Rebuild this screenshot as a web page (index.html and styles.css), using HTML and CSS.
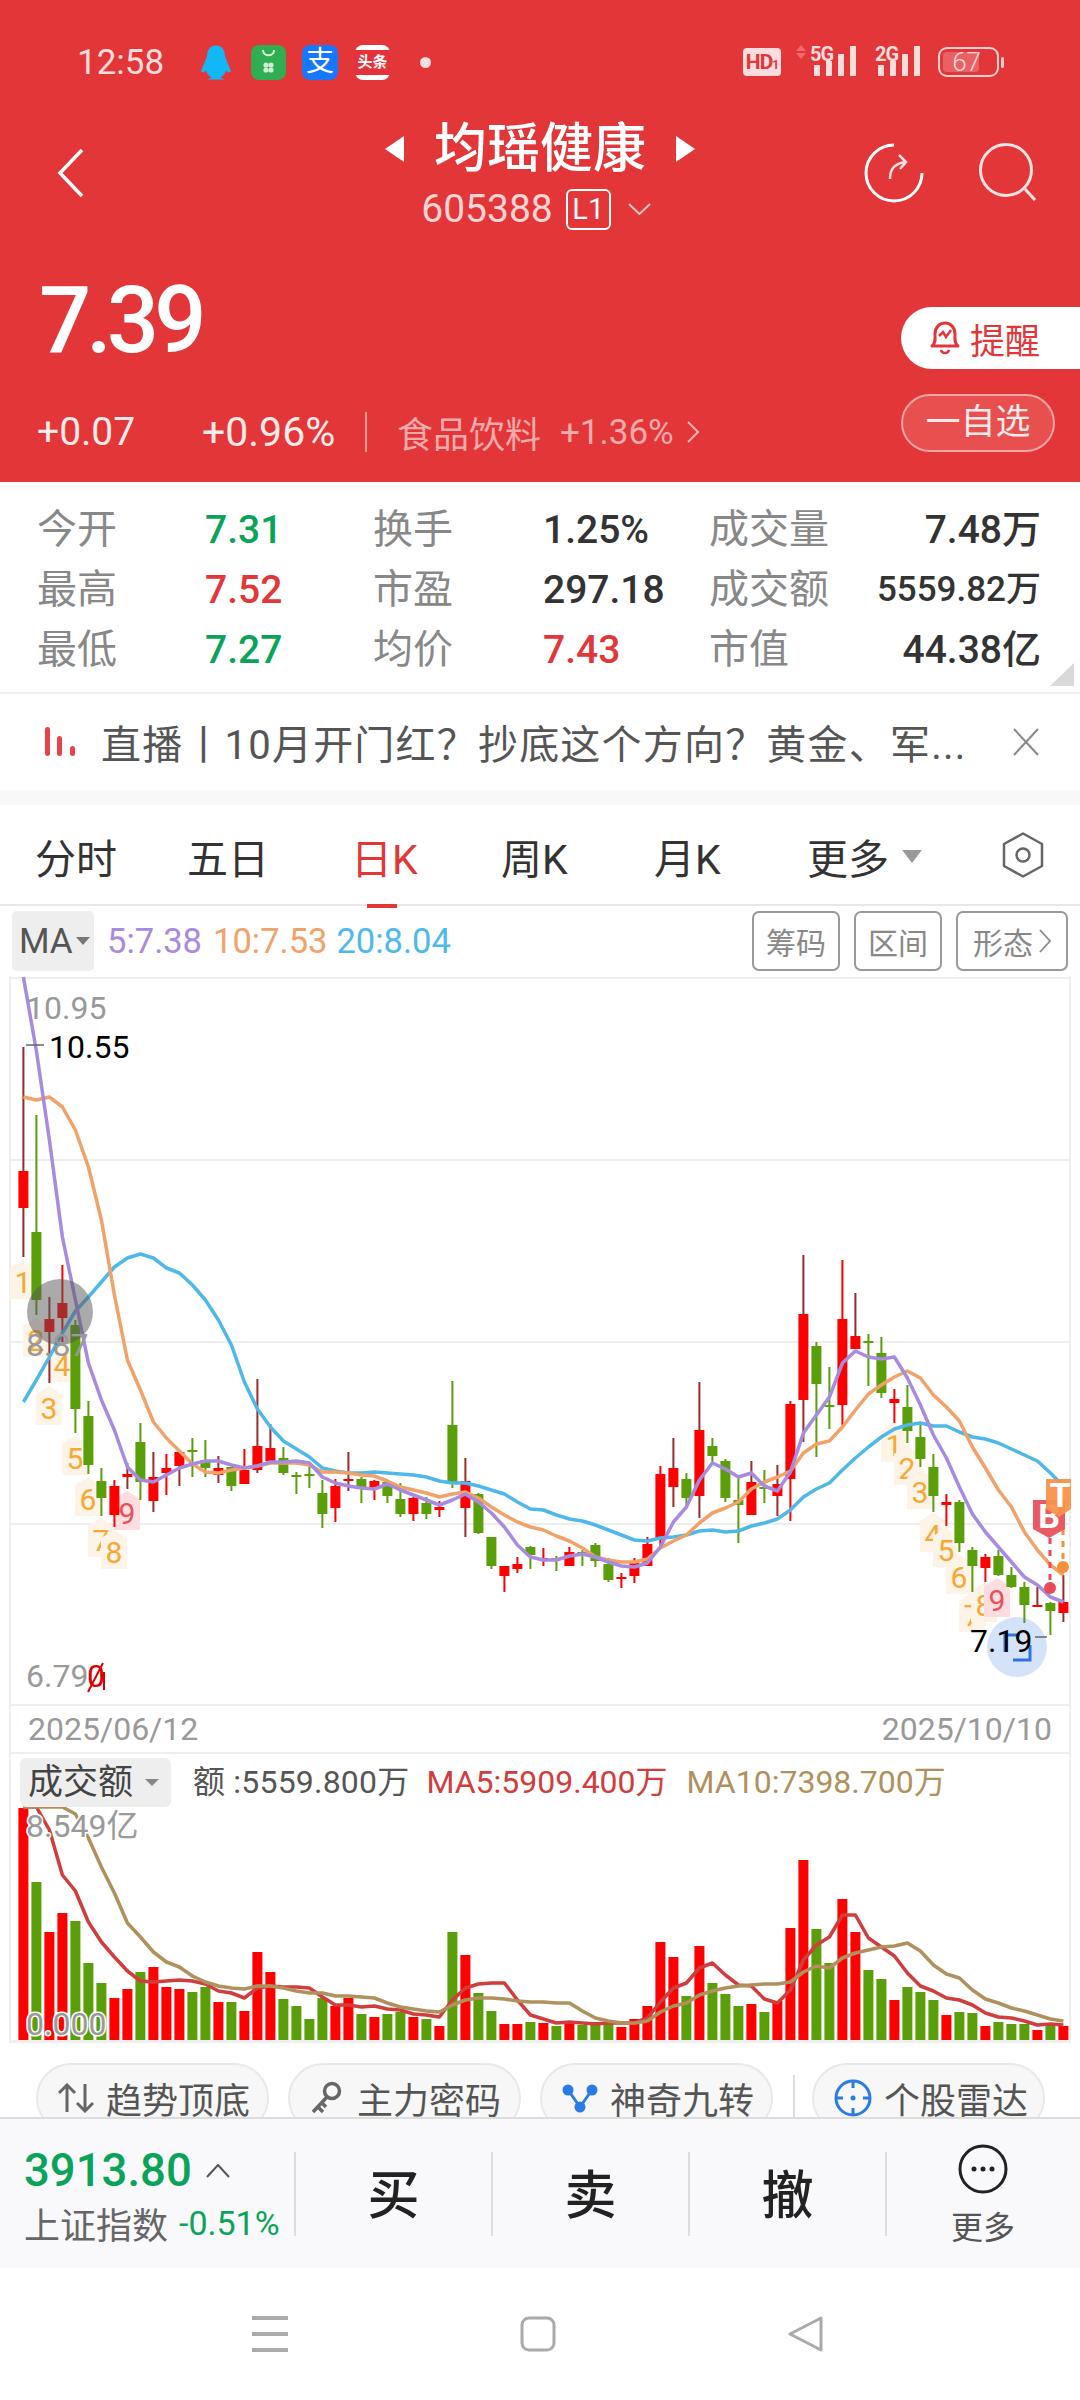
FILE: index.html
```html
<!DOCTYPE html>
<html>
	<head>
		<meta charset="UTF-8">
		<title>均瑶健康</title>
		<link rel="stylesheet" href="styles.css">
	</head>
	<body>
		<div id="page">
			<div class="head">
				<div class="status">
					<span class="clock">12:58</span>
					<svg class="app app-qq" width="30" height="34" viewBox="0 0 30 34"><path fill="#12b7f5" d="M15 0C8 0 6 6 6 11C4 16 2 20 0 26C2 28 4 26 5 25C6 28 8 31 11 32L6 34L24 34L19 32C22 31 24 28 25 25C26 26 28 28 30 26C28 20 26 16 24 11C24 6 22 0 15 0Z"/></svg>
					<svg class="app app-green" width="35" height="35" viewBox="0 0 35 35"><rect width="35" height="35" rx="8" fill="#2fae52"/><path d="M12 5C12 12 23 12 23 5" fill="none" stroke="#d8f3df" stroke-width="2"/><circle cx="15" cy="20" r="2.6" fill="#cdeed6"/><circle cx="20" cy="20" r="2.6" fill="#cdeed6"/><circle cx="15" cy="25" r="2.6" fill="#cdeed6"/><circle cx="20" cy="25" r="2.6" fill="#cdeed6"/></svg>
					<span class="app app-ali">支</span>
					<span class="app app-tt"><span>头条</span></span>
					<span class="status-dot"></span>
					<div class="status-right">
						<span class="hd">HD<small>1</small></span>
						<svg class="sig" width="62" height="34" viewBox="0 0 62 34">
							<path d="M1 6L6 0L11 6Z M1 8L11 8L6 14Z" fill="#ee6a6c"/>
							<text class="net" x="15" y="16">5G</text>
							<rect x="19" y="20" width="6" height="11" fill="#fddcdc"/><rect x="31" y="16" width="6" height="15" fill="#fddcdc"/><rect x="43" y="9" width="6" height="22" fill="#fddcdc"/><rect x="55" y="1" width="6" height="30" fill="#fddcdc"/>
						</svg>
						<svg class="sig sig2" width="46" height="34" viewBox="0 0 46 34">
							<text class="net" x="0" y="16">2G</text>
							<rect x="3" y="20" width="6" height="11" fill="#fddcdc"/><rect x="15" y="16" width="6" height="15" fill="#fddcdc"/><rect x="27" y="9" width="6" height="22" fill="#fddcdc"/><rect x="39" y="1" width="6" height="30" fill="#fddcdc"/>
						</svg>
						<div class="battery"><div class="battery-fill"></div><span>67</span></div>
						<span class="battery-tip"></span>
					</div>
				</div>
				<div class="nav">
					<div class="nav-left">
						<svg width="28" height="50" viewBox="0 0 28 50"><path d="M25 2L3 25L25 48" fill="none" stroke="#fff" stroke-width="3.5"/></svg>
					</div>
					<div class="nav-mid">
						<div class="name-line">
							<span class="tri-l"></span>
							<span class="name">均瑶健康</span>
							<span class="tri-r"></span>
						</div>
						<div class="code-line">
							<span class="code">605388</span>
							<span class="lv">L1</span>
							<svg width="23" height="12" viewBox="0 0 23 12"><path d="M1 1L11.5 11L22 1" fill="none" stroke="#f7c3c3" stroke-width="2"/></svg>
						</div>
					</div>
					<div class="nav-right">
						<svg width="60" height="60" viewBox="0 0 60 60" fill="none"><path d="M30 2A28 28 0 1 0 58 30" stroke="#fff" stroke-width="3"/><path d="M26 36C26 26 30 21 41 19M35 12L42 19L36 26" stroke="#fde3e3" stroke-width="2.5"/></svg>
						<svg width="58" height="58" viewBox="0 0 58 58" fill="none"><circle cx="27" cy="27" r="25.500" stroke="#fde3e3" stroke-width="3"/><path d="M46 46L56 57" stroke="#fde3e3" stroke-width="3"/></svg>
					</div>
				</div>
				<div class="quote">
					<div class="quote-left">
						<div class="price">7.39</div>
						<div class="change">
							<span class="chg chg-abs">+0.07</span>
							<span class="chg chg-pct">+0.96%</span>
							<span class="vbar"></span>
							<span class="sector">食品饮料</span>
							<span class="sector-pct">+1.36%</span>
							<svg width="14" height="22" viewBox="0 0 14 22"><path d="M2 1L12 11L2 21" fill="none" stroke="#f3b5b5" stroke-width="2"/></svg>
						</div>
					</div>
					<div class="quote-right">
						<div class="remind">
							<svg width="34" height="34" viewBox="0 0 34 34" fill="none"><path d="M4 25C8 22 7 18 7 13C7 6 12 2 17 2C22 2 27 6 27 13C27 18 26 22 30 25Z" stroke="#e33639" stroke-width="3" stroke-linejoin="round"/><path d="M13 29C14 33 20 33 21 29M11 15L15 11L18 16L23 9" stroke="#e33639" stroke-width="2.500"/></svg>
							<span>提醒</span>
						</div>
						<div class="follow">一自选</div>
					</div>
				</div>
			</div>

			<div class="stats">
				<span class="lab">今开</span><span class="val green">7.31</span>
				<span class="lab">换手</span><span class="val">1.25%</span>
				<span class="lab">成交量</span><span class="val end">7.48万</span>
				<span class="lab">最高</span><span class="val red">7.52</span>
				<span class="lab">市盈</span><span class="val">297.18</span>
				<span class="lab">成交额</span><span class="val end small">5559.82万</span>
				<span class="lab">最低</span><span class="val green">7.27</span>
				<span class="lab">均价</span><span class="val red">7.43</span>
				<span class="lab">市值</span><span class="val end">44.38亿</span>
				<span class="corner"></span>
			</div>

			<div class="notice">
				<svg width="31" height="30" viewBox="0 0 31 30"><rect x="0" y="0" width="5" height="29" rx="2.500" fill="#e8424a"/><rect x="12" y="9" width="5" height="20" rx="2.500" fill="#e8424a"/><rect x="25" y="19" width="5" height="10" rx="2.500" fill="#e8424a"/></svg>
				<span class="notice-text">直播丨10月开门红？抄底这个方向？黄金、军...</span>
				<svg width="28" height="28" viewBox="0 0 28 28"><path d="M2 1L26 27M26 1L2 27" stroke="#888" stroke-width="2"/></svg>
			</div>
			<div class="band"></div>

			<div class="tabs">
				<span class="tab t1">分时</span>
				<span class="tab t2">五日</span>
				<span class="tab t3 on">日K</span>
				<span class="tab t4">周K</span>
				<span class="tab t5">月K</span>
				<span class="tab">更多</span>
				<span class="tab-tri"></span>
				<svg class="hex" width="42" height="46" viewBox="0 0 42 46" fill="none"><path d="M21 1.500L40 12V34L21 44.500L2 34V12Z" stroke="#666" stroke-width="2.500" stroke-linejoin="round"/><circle cx="21" cy="23" r="6.500" stroke="#666" stroke-width="2.500"/></svg>
			</div>

			<div class="ma-row">
				<div class="ma-btn">MA<span class="ma-tri"></span></div>
				<span class="ma ma5">5:7.38</span>
				<span class="ma ma10">10:7.53</span>
				<span class="ma ma20">20:8.04</span>
				<div class="tool-btns">
					<span class="tool">筹码</span>
					<span class="tool">区间</span>
					<span class="tool tool-more">形态<svg width="12" height="24" viewBox="0 0 12 24"><path d="M1 1L11 12L1 23" fill="none" stroke="#888" stroke-width="1.800"/></svg></span>
				</div>
			</div>

			<svg id="kline" width="1080" height="730" viewBox="0 976 1080 730">
				<g id="klineGrid"></g>
				<g id="tags"></g>
				<g id="candles"></g>
				<g id="maLines"></g>
				<path d="M1050 1538V1582" class="dash dash-b"/>
				<path d="M1063 1517V1560" class="dash dash-t"/>
				<circle cx="1050" cy="1588" r="6" fill="#ea4a55"/>
				<circle cx="1063" cy="1567" r="6" fill="#f59038"/>
				<path d="M1033 1500H1065V1529L1049 1538L1033 1529Z" fill="#ea5a62"/>
				<text class="bs" x="1049" y="1528">B</text>
				<path d="M1046 1479H1071V1509L1059 1517L1046 1509Z" fill="#f8924a" opacity=".95"/>
				<text class="bs" x="1060" y="1507">T</text>
				<circle cx="60" cy="1312" r="33" fill="#555" opacity=".5"/>
				<circle cx="1017" cy="1647" r="30" fill="#2f74e0" opacity=".2"/>
				<path d="M1005 1652V1635H1020M1013 1660H1030V1645" fill="none" stroke="#2f74e0" stroke-width="3"/>
				<text class="axis" x="26" y="1019">10.95</text>
				<path d="M26 1045H44" stroke="#666" stroke-width="1.500"/>
				<text class="peak" x="49" y="1058">10.55</text>
				<text class="axis" x="26" y="1356">8.87</text>
				<text class="axis" x="26" y="1687">6.79</text>
				<text class="axis-red" x="87" y="1687">0</text>
				<path d="M88 1692L103 1663M104 1672V1690" fill="none" stroke="#d00" stroke-width="2"/>
				<text class="peak" x="970" y="1652">7.19</text>
				<path d="M1035 1637H1047" stroke="#666" stroke-width="1.500"/>
			</svg>

			<div class="dates">
				<span>2025/06/12</span>
				<span>2025/10/10</span>
			</div>

			<div class="vol">
				<svg id="volume" width="1080" height="292" viewBox="0 1752 1080 292">
					<g id="volGrid"></g>
					<g id="volBars"></g>
					<g id="volLines"></g>
					<text class="axis halo" x="26" y="1837">8.549亿</text>
					<text class="axis halo" x="26" y="2035">0.000</text>
				</svg>
				<div class="vol-legend">
					<div class="vol-btn">成交额<span class="vol-tri"></span></div>
					<span class="vol-now">额 :5559.800万</span>
					<span class="vol-ma5">MA5:5909.400万</span>
					<span class="vol-ma10">MA10:7398.700万</span>
				</div>
			</div>

			<div class="chips">
				<div class="chip">
					<svg width="36" height="30" viewBox="0 0 36 30" fill="none" stroke="#666" stroke-width="3"><path d="M9 29V2M1 10L9 2L17 10M27 1V28M19 20L27 28L35 20"/></svg>
					<span>趋势顶底</span>
				</div>
				<div class="chip chip-key">
					<svg width="32" height="34" viewBox="0 0 32 34" fill="none" stroke="#666" stroke-width="3.500"><circle cx="22" cy="10" r="7.500"/><path d="M17 16L3 31M8 26L13 31M12 22L16 26"/></svg>
					<span>主力密码</span>
				</div>
				<div class="chip">
					<svg width="36" height="30" viewBox="0 0 36 30" fill="none"><path d="M6 7L18 24L30 7" stroke="#2b7be5" stroke-width="3"/><circle cx="6" cy="7" r="5.500" fill="#2b7be5"/><circle cx="30" cy="7" r="5.500" fill="#2b7be5"/><circle cx="18" cy="24" r="5.500" fill="#2b7be5"/></svg>
					<span>神奇九转</span>
				</div>
				<span class="chip-bar"></span>
				<div class="chip">
					<svg width="38" height="38" viewBox="0 0 38 38" fill="none" stroke="#2b7be5" stroke-width="3"><circle cx="19" cy="19" r="17"/><path d="M19 1V9M19 29V37M1 19H9M29 19H37"/><circle cx="19" cy="19" r="2.500" fill="#2b7be5" stroke="none"/></svg>
					<span>个股雷达</span>
				</div>
			</div>

			<div class="trade">
				<div class="index">
					<div class="index-top"><span class="index-num">3913.80</span><svg width="24" height="14" viewBox="0 0 24 14"><path d="M1 13L12 1L23 13" fill="none" stroke="#555" stroke-width="2"/></svg></div>
					<div class="index-sub"><span class="index-name">上证指数</span><span class="index-pct">-0.51%</span></div>
				</div>
				<div class="cell act">买</div>
				<div class="cell act">卖</div>
				<div class="cell act">撤</div>
				<div class="cell more">
					<svg width="50" height="50" viewBox="0 0 50 50"><circle cx="25" cy="25" r="23" fill="none" stroke="#222" stroke-width="3"/><circle cx="16" cy="25" r="2.500" fill="#222"/><circle cx="25" cy="25" r="2.500" fill="#222"/><circle cx="34" cy="25" r="2.500" fill="#222"/></svg>
					<span>更多</span>
				</div>
			</div>

			<div class="sysnav">
				<svg width="36" height="36" viewBox="0 0 36 36"><path d="M0 2H36M0 18H36M0 34H36" stroke="#aaa" stroke-width="4"/></svg>
				<svg width="36" height="36" viewBox="0 0 36 36"><rect x="2" y="2" width="32" height="32" rx="7" fill="none" stroke="#aaa" stroke-width="3"/></svg>
				<svg width="36" height="36" viewBox="0 0 36 36"><path d="M33 2V34L2 18Z" fill="none" stroke="#aaa" stroke-width="3" stroke-linejoin="round"/></svg>
			</div>
		</div>
		<script src="chart.js"></script>
	</body>
</html>
```

FILE: styles.css
```css
html,body{
	margin:0;
	padding:0;
	background:#fff;
}
#page{
	width:1080px;
	height:2400px;
	overflow:hidden;
	font-family:Roboto,"Noto Sans CJK SC",sans-serif;
	color:#222;
}
svg{
	display:block;
	flex:none;
}

/* 红色头部 */
.head{
	height:482px;
	background:#e33639;
}
.status{
	height:124px;
	display:flex;
	align-items:center;
	padding-left:77px;
	box-sizing:border-box;
}
.clock{
	font-size:35px;
	color:#fcdcdc;
	width:87px;
}
.app{
	width:35px;
	height:35px;
}
.app-qq{
	width:30px;
	margin-left:37px;
}
.app-green{
	margin-left:20px;
}
.app-ali{
	width:36px;
	margin-left:16px;
	box-sizing:border-box;
	background:#1677ff;
	border-radius:8px;
	color:#fff;
	font-size:28px;
	line-height:34px;
	text-align:center;
}
.app-tt{
	margin-left:17px;
	box-sizing:border-box;
	background:#fff;
	border-radius:8px;
	padding:5px 0;
}
.app-tt span{
	display:block;
	height:25px;
	background:#e6303a;
	color:#fff;
	font-size:15px;
	font-weight:700;
	line-height:25px;
	text-align:center;
}
.status-dot{
	width:11px;
	height:11px;
	border-radius:50%;
	background:#fcdcdc;
	margin-left:30px;
}
.status-right{
	margin-left:auto;
	padding-right:76px;
	display:flex;
	align-items:center;
}
.hd{
	box-sizing:border-box;
	width:38px;
	height:28px;
	background:#fcdcdc;
	border-radius:4px;
	color:#e33639;
	font-size:21px;
	font-weight:700;
	line-height:28px;
	text-align:center;
	letter-spacing:-1px;
	margin-right:14px;
}
.hd small{
	font-size:12px;
}
.sig{
	overflow:visible;
}
.net{
	font-size:20px;
	font-weight:700;
	fill:#fddcdc;
	letter-spacing:-1px;
}
.sig2{
	margin-left:18px;
}
.battery{
	position:relative;
	box-sizing:border-box;
	width:61px;
	height:30px;
	margin-left:17px;
	border:2px solid #fcd0d0;
	border-radius:9px;
	padding:3px;
}
.battery-fill{
	width:36px;
	height:20px;
	border-radius:4px;
	background:#ea6164;
}
.battery span{
	position:absolute;
	right:16px;
	top:0;
	line-height:26px;
	font-size:26px;
	font-weight:300;
	color:#fcdcdc;
}
.battery-tip{
	width:3px;
	height:11px;
	margin-left:2px;
	background:#fcc8c8;
	border-radius:2px;
}

.nav{
	height:108px;
	display:grid;
	grid-template-columns:1fr auto 1fr;
}
.nav-left{
	padding:24px 0 0 57px;
}
.nav-mid{
	display:flex;
	flex-direction:column;
	align-items:center;
}
.name-line{
	height:50px;
	display:flex;
	align-items:center;
	gap:30px;
}
.name{
	font-size:53px;
	font-weight:500;
	line-height:50px;
	color:#fff;
}
.tri-l,.tri-r{
	width:0;
	height:0;
	border-top:13px solid transparent;
	border-bottom:13px solid transparent;
}
.tri-l{
	border-right:19px solid #fff;
}
.tri-r{
	border-left:19px solid #fff;
}
.code-line{
	margin-top:12px;
	display:flex;
	align-items:center;
}
.code{
	font-size:39px;
	color:#fbd5d5;
	margin-left:-8px;
}
.lv{
	box-sizing:border-box;
	width:45px;
	height:41px;
	margin:0 17px 0 13px;
	border:2px solid #fff;
	border-radius:6px;
	color:#fff;
	font-size:29px;
	line-height:37px;
	text-align:center;
}
.nav-right{
	display:flex;
	justify-content:flex-end;
	gap:55px;
	padding:19px 43px 0 0;
}

.quote{
	height:250px;
	display:flex;
	justify-content:space-between;
}
.quote-left{
	padding-left:37px;
}
.price{
	margin-top:44px;
	margin-left:2px;
	font-size:92px;
	font-weight:500;
	line-height:90px;
	letter-spacing:-5px;
	color:#fff;
}
.change{
	margin-top:46px;
	height:40px;
	display:flex;
	align-items:center;
	color:#fdeaea;
}
.chg{
	font-size:39px;
}
.chg-abs{
	width:165px;
}
.chg-pct{
	width:163px;
	font-size:41px;
}
.vbar{
	width:2px;
	height:40px;
	background:#f09a9a;
	margin-right:30px;
}
.sector{
	width:163px;
	font-size:36px;
	color:#f3aaaa;
}
.sector-pct{
	width:126px;
	font-size:35px;
	color:#f3aaaa;
}
.quote-right{
	width:179px;
	padding-top:75px;
}
.remind{
	height:62px;
	display:flex;
	align-items:center;
	padding-left:27px;
	background:#fff;
	border-radius:31px 0 0 31px;
}
.remind span{
	margin-left:8px;
	font-size:35px;
	color:#e33639;
}
.follow{
	box-sizing:border-box;
	width:154px;
	height:58px;
	margin-top:25px;
	border:2px solid #f4a5a5;
	border-radius:29px;
	background:#e8504f;
	color:#fdeaea;
	font-size:35px;
	line-height:53px;
	text-align:center;
}

/* 行情数据 */
.stats{
	position:relative;
	box-sizing:border-box;
	height:212px;
	padding:18px 39px 0 37px;
	display:grid;
	grid-template-columns:168px 168px 170px 166px 120px 212px;
	grid-auto-rows:60px;
	border-bottom:2px solid #f0f0f0;
}
.lab{
	font-size:40px;
	line-height:60px;
	color:#888;
	white-space:nowrap;
}
.val{
	font-size:39px;
	font-weight:500;
	line-height:60px;
	color:#333;
	white-space:nowrap;
}
.stats .end{
	text-align:right;
}
.stats .small{
	font-size:35px;
}
.green{
	color:#0aa35a;
}
.red{
	color:#e33639;
}
.corner{
	position:absolute;
	right:6px;
	bottom:6px;
	width:24px;
	height:23px;
	background:#d9d9d9;
	clip-path:polygon(100% 0,100% 100%,0 100%);
}

/* 公告 */
.notice{
	height:96px;
	display:flex;
	align-items:center;
	padding-left:45px;
}
.notice-text{
	width:911px;
	margin-left:25px;
	font-size:40px;
	letter-spacing:1.200px;
	color:#555;
	white-space:nowrap;
}
.band{
	height:15px;
	background:#f8f8f8;
}

/* 周期切换 */
.tabs{
	box-sizing:border-box;
	height:101px;
	padding:3px 36px 0 35px;
	display:flex;
	align-items:center;
	border-bottom:2px solid #e8e8e8;
}
.tab{
	position:relative;
	font-size:41px;
	color:#333;
	flex:none;
}
.t1{width:152px;}
.t2{width:164px;}
.t3{width:150px;}
.t4{width:153px;}
.t5{width:153px;}
.on{
	color:#e33639;
}
.on::after{
	content:"";
	position:absolute;
	left:16px;
	bottom:-22px;
	width:30px;
	height:4px;
	background:#e33639;
}
.tab-tri{
	width:0;
	height:0;
	margin-left:13px;
	border-left:10px solid transparent;
	border-right:10px solid transparent;
	border-top:13px solid #999;
}
.hex{
	margin-left:auto;
	margin-top:-3px;
}

.ma-row{
	height:70px;
	display:flex;
	align-items:center;
	padding-left:12px;
}
.ma-btn{
	box-sizing:border-box;
	width:82px;
	height:60px;
	padding-left:7px;
	display:flex;
	align-items:center;
	border-radius:5px;
	background:#eee;
	font-size:35px;
	color:#555;
}
.ma-tri{
	width:0;
	height:0;
	margin-left:3px;
	border-left:7px solid transparent;
	border-right:7px solid transparent;
	border-top:8px solid #777;
}
.ma{
	font-size:34.500px;
	white-space:nowrap;
}
.ma5{
	margin-left:13px;
	color:#a78be0;
}
.ma10{
	margin-left:11px;
	color:#f0a268;
}
.ma20{
	margin-left:9px;
	color:#4fb9ea;
}
.tool-btns{
	margin-left:auto;
	padding-right:12px;
	display:flex;
	gap:14px;
}
.tool{
	box-sizing:border-box;
	width:88px;
	height:60px;
	display:flex;
	align-items:center;
	justify-content:center;
	border:2px solid #999;
	border-radius:7px;
	font-size:30px;
	color:#888;
}
.tool-more{
	width:112px;
	gap:6px;
}

/* K线图 */
#kline,#volume{
	overflow:hidden;
}
.dash{
	fill:none;
	stroke-width:3;
	stroke-dasharray:6 6;
}
.dash-b{
	stroke:#ea4a55;
}
.dash-t{
	stroke:#f59038;
}
.bs{
	font-size:34px;
	font-weight:700;
	fill:#fff;
	text-anchor:middle;
}
.axis{
	font-size:32px;
	fill:#999;
}
.axis-red{
	font-size:32px;
	fill:#d00;
}
.peak{
	font-size:32px;
	fill:#000;
}
.halo{
	stroke:#fff;
	stroke-width:3px;
	paint-order:stroke;
}
.tag{
	font-size:30px;
	fill:#f5a833;
	text-anchor:middle;
}
.tag-end{
	fill:#e8505a;
}
.dates{
	box-sizing:border-box;
	height:46px;
	margin:0 9px;
	padding:0 17px 0 17px;
	display:flex;
	align-items:center;
	justify-content:space-between;
	border-left:2px solid #eee;
	border-right:2px solid #eee;
	font-size:32px;
	color:#999;
}

.vol{
	position:relative;
	height:292px;
}
.vol-legend{
	position:absolute;
	left:20px;
	top:6px;
	display:flex;
	align-items:flex-start;
	font-size:32px;
	line-height:48px;
	white-space:nowrap;
}
.vol-btn{
	box-sizing:border-box;
	width:151px;
	height:49px;
	padding-left:8px;
	display:flex;
	align-items:center;
	border-radius:6px;
	background:#eee;
	font-size:35px;
	color:#444;
}
.vol-tri{
	width:0;
	height:0;
	margin-left:12px;
	border-left:7px solid transparent;
	border-right:7px solid transparent;
	border-top:7px solid #888;
}
.vol-now{
	margin-left:22px;
	letter-spacing:.2px;
	color:#555;
}
.vol-ma5{
	margin-left:17px;
	color:#d13c3c;
}
.vol-ma10{
	margin-left:19px;
	color:#b0905c;
}

/* 功能入口 */
.chips{
	box-sizing:border-box;
	height:73px;
	padding:19px 0 0 36px;
	display:flex;
	align-items:flex-start;
	overflow:hidden;
}
.chip{
	box-sizing:border-box;
	flex:none;
	width:233px;
	height:70px;
	margin-right:19px;
	padding-left:20px;
	display:flex;
	align-items:center;
	gap:12px;
	border:2px solid #e8e8e8;
	border-radius:35px;
	background:#f7f7f7;
	font-size:36px;
	color:#555;
	white-space:nowrap;
}
.chip-key{
	gap:15px;
}
.chip-bar{
	flex:none;
	width:2px;
	height:60px;
	margin:12px 17px 0 1px;
	background:#ddd;
}

/* 底部交易栏 */
.trade{
	box-sizing:border-box;
	height:151px;
	display:flex;
	align-items:center;
	border-top:2px solid #ddd;
	background:#f9f9fb;
}
.index{
	box-sizing:border-box;
	width:294px;
	padding-left:24px;
}
.index-top{
	display:flex;
	align-items:center;
	height:52px;
}
.index-num{
	font-size:45.500px;
	font-weight:500;
	color:#0aa35a;
	line-height:52px;
}
.index-top svg{
	margin-left:14px;
}
.index-sub{
	display:flex;
	align-items:center;
	height:40px;
	margin-top:6px;
}
.index-name{
	font-size:36px;
	color:#666;
}
.index-pct{
	margin-left:11px;
	font-size:34px;
	color:#0aa35a;
}
.cell{
	box-sizing:border-box;
	width:197px;
	height:84px;
	display:flex;
	align-items:center;
	justify-content:center;
	border-left:2px solid #ddd;
}
.act{
	padding-bottom:4px;
	font-size:52px;
	font-weight:500;
	color:#222;
}
.more{
	flex-direction:column;
	width:194px;
	gap:18px;
	font-size:32px;
	color:#555;
}
.more span{
	line-height:32px;
}

.sysnav{
	height:132px;
	padding-left:252px;
	display:flex;
	align-items:center;
	gap:232px;
	background:#fff;
}
```

FILE: chart.js
```js
var candles=[
['d',1047,1171,1208,1257],['g',1115,1232,1300,1315],['d',1297,1319,1332,1383],['r',1265,1303,1318,1342],['g',1320,1325,1409,1433],
['g',1401,1416,1465,1474],['g',1468,1481,1498,1516],['r',1480,1486,1515,1527],['d',1463,1474,1477,1489],['g',1423,1442,1482,1500],
['d',1452,1477,1501,1512],['r',1454,1468,1473,1495],['d',1452,1452,1466,1486],['g',1438,1450,1451,1477],['g',1440,1460,1468,1477],
['d',1456,1468,1475,1483],['g',1467,1467,1486,1491],['r',1449,1470,1484,1484],['d',1379,1446,1470,1473],['d',1424,1448,1461,1461],
['g',1447,1458,1473,1475],['g',1472,1475,1476,1494],['g',1465,1474,1475,1488],['g',1480,1493,1514,1528],['r',1479,1486,1508,1522],
['d',1452,1479,1481,1491],['g',1477,1479,1489,1503],['r',1480,1481,1489,1500],['g',1480,1482,1496,1503],['g',1483,1499,1514,1517],
['r',1497,1498,1514,1521],['g',1497,1503,1514,1519],['r',1501,1507,1510,1517],['g',1381,1425,1484,1488],['d',1458,1481,1508,1537],
['g',1493,1494,1533,1534],['g',1537,1537,1566,1569],['r',1566,1566,1576,1592],['r',1557,1564,1569,1573],['g',1546,1547,1555,1569],
['r',1548,1558,1560,1566],['g',1556,1558,1560,1571],['r',1547,1552,1566,1566],['g',1550,1552,1554,1566],['g',1543,1545,1561,1567],
['g',1558,1564,1580,1582],['r',1573,1577,1579,1588],['r',1558,1563,1576,1583],['r',1537,1544,1566,1566],['r',1466,1474,1540,1547],
['d',1438,1468,1487,1507],['g',1473,1479,1498,1507],['d',1382,1430,1496,1518],['g',1438,1446,1456,1463],['g',1459,1461,1498,1502],
['g',1478,1500,1505,1543],['d',1461,1482,1515,1515],['g',1470,1487,1489,1503],['d',1465,1484,1496,1516],['r',1401,1404,1479,1521],
['d',1255,1314,1400,1442],['g',1342,1346,1384,1457],['g',1367,1405,1407,1429],['r',1260,1319,1405,1425],['d',1293,1336,1349,1349],
['g',1334,1341,1343,1386],['g',1337,1353,1393,1398],['r',1389,1399,1403,1423],['g',1385,1407,1431,1443],['g',1425,1437,1459,1467],
['g',1454,1467,1496,1512],['r',1494,1502,1505,1526],['g',1500,1502,1543,1552],['g',1547,1550,1566,1592],['r',1554,1557,1568,1582],
['g',1550,1556,1575,1576],['g',1567,1575,1587,1588],['g',1582,1587,1605,1623],['d',1587,1605,1606,1606],['g',1602,1603,1611,1635],
['d',1575,1602,1613,1622]
];
var volTops=[1808,1882,1932,1913,1921,1963,1983,1998,1989,1972,1967,1987,1989,1992,1987,2002,2002,2011,1952,1972,1999,2006,2019,1998,2006,1998,2014,2017,2014,2012,2017,2019,2026,1932,1955,1993,2011,2024,2024,2022,2023,2026,2024,2025,2022,2023,2027,2019,2006,1942,1957,1996,1946,1983,1994,2006,2004,2012,2001,1928,1860,1929,1963,1899,1932,1970,1979,2000,1987,1992,2000,2015,2012,2013,2026,2022,2024,2024,2030,2025,2026];
var ma5=[977,1051,1140,1237,1300,1363,1400,1430,1467,1480,1482,1475,1468,1464,1461,1461,1465,1468,1466,1462,1462,1461,1463,1477,1483,1486,1488,1489,1484,1490,1495,1500,1505,1500,1494,1502,1513,1527,1545,1557,1560,1560,1556,1554,1557,1562,1566,1567,1563,1547,1522,1507,1480,1463,1469,1477,1473,1486,1491,1472,1433,1415,1397,1363,1351,1357,1359,1357,1378,1405,1435,1458,1487,1514,1532,1547,1562,1577,1585,1597,1602];
var ma10=[1097,1100,1097,1107,1130,1167,1220,1295,1360,1390,1422,1438,1451,1464,1472,1473,1470,1468,1466,1463,1463,1463,1465,1472,1472,1473,1475,1476,1481,1487,1490,1493,1497,1494,1492,1498,1507,1515,1522,1527,1530,1536,1541,1548,1557,1560,1562,1562,1559,1548,1541,1535,1523,1513,1508,1502,1489,1482,1477,1471,1453,1444,1441,1427,1410,1394,1385,1377,1371,1378,1395,1407,1421,1447,1468,1490,1507,1532,1550,1565,1575];
var ma20=[1402,1380,1357,1333,1311,1297,1282,1267,1258,1254,1258,1268,1273,1285,1300,1320,1345,1382,1409,1427,1441,1449,1457,1468,1471,1473,1473,1472,1473,1474,1475,1477,1481,1483,1483,1486,1490,1494,1502,1509,1510,1515,1519,1521,1525,1530,1535,1540,1541,1538,1537,1535,1531,1530,1532,1531,1526,1523,1519,1510,1497,1489,1483,1470,1458,1447,1437,1429,1425,1423,1426,1426,1432,1437,1439,1443,1449,1455,1461,1473,1486];
var volMa5=[1807,1807,1830,1875,1891,1922,1942,1957,1971,1981,1982,1981,1980,1981,1984,1991,1993,1998,1988,1986,1987,1987,1988,1997,2005,2005,2007,2006,2009,2010,2014,2015,2017,2000,1988,1984,1983,1983,2000,2015,2019,2023,2022,2023,2024,2023,2023,2023,2018,2002,1988,1983,1968,1963,1975,1985,1986,1999,2003,1990,1960,1945,1937,1915,1915,1938,1947,1956,1973,1986,1991,1998,2000,2005,2013,2017,2018,2021,2025,2024,2025];
var volMa10=[1807,1807,1807,1807,1814,1838,1867,1893,1923,1937,1952,1962,1967,1976,1982,1986,1988,1989,1986,1986,1988,1991,1993,1993,1996,1996,1997,1998,2003,2007,2009,2011,2012,2005,2000,1998,1998,1999,2001,2002,2002,2003,2003,2011,2018,2021,2023,2023,2021,2012,2006,2003,1995,1991,1988,1986,1985,1984,1984,1982,1972,1966,1968,1958,1953,1950,1947,1946,1943,1951,1965,1974,1978,1990,1999,2003,2008,2011,2015,2019,2021];
// 九转序号 [x,y,数字]
var tags=[[23,1282,1],[36,1340,2],[49,1408,3],[62,1365,4],[75,1458,5],[88,1499,6],[101,1540,7],[114,1552,8],[127,1513,9],
[894,1445,1],[907,1468,2],[920,1492,3],[933,1535,4],[946,1550,5],[959,1577,6],[972,1615,7],[984,1605,8],[997,1600,9]];
var GREEN='#5a9e0a',RED='#f00',DARK='#9c2a2a';

function xAt(i){return 23.4+13*i;}
function line(ys,color,w){
	var pts=ys.map(function(y,i){return xAt(i)+','+y;}).join(' ');
	return '<polyline points="'+pts+'" fill="none" stroke="'+color+'" stroke-width="'+w+'" stroke-linejoin="round"/>';
}
function rect(x,y,w,h,color){
	return '<rect x="'+x+'" y="'+y+'" width="'+w+'" height="'+h+'" fill="'+color+'"/>';
}

var grid='';
[977,1159,1341,1523,1704].forEach(function(y){grid+=rect(9,y,1062,2,'#eee');});
grid+=rect(9,976,2,730,'#eee')+rect(1069,976,2,730,'#eee');
document.getElementById('klineGrid').innerHTML=grid;

var tagHtml='';
tags.forEach(function(t){
	var bg=t[2]==9?'#fddde0':'#fdf3e6';
	var x=t[0],y=t[1];
	tagHtml+='<path d="M'+(x-13)+' '+(y-14)+'L'+x+' '+(y-22)+'L'+(x+13)+' '+(y-14)+'V'+(y+17)+'H'+(x-13)+'Z" fill="'+bg+'"/>';
	tagHtml+='<text class="tag'+(t[2]==9?' tag-end':'')+'" x="'+x+'" y="'+(y+11)+'">'+t[2]+'</text>';
});
document.getElementById('tags').innerHTML=tagHtml;

var c='',v='';
candles.forEach(function(d,i){
	var x=xAt(i),body=d[0]=='g'?GREEN:RED,wick=d[0]=='g'?GREEN:(d[0]=='d'?DARK:RED);
	c+=rect(x-1,d[1],2,d[4]-d[1],wick);
	c+=rect(x-5,d[2],10,Math.max(d[3]-d[2],2),body);
	v+=rect(x-5,volTops[i],10,2040-volTops[i],body);
});
document.getElementById('candles').innerHTML=c;
document.getElementById('volBars').innerHTML=v;

document.getElementById('maLines').innerHTML=line(ma20,'#4fb8ea',3.5)+line(ma10,'#f0a268',3.5)+line(ma5,'#a78be0',3.5);
document.getElementById('volLines').innerHTML=line(volMa5,'#d13c3c',3.5)+line(volMa10,'#b0905c',3.5);
document.getElementById('volGrid').innerHTML=rect(9,1752,2,290,'#eee')+rect(1069,1752,2,290,'#eee')+rect(9,1752,1062,2,'#eee')+rect(9,2040,1062,3,'#eee');
```
